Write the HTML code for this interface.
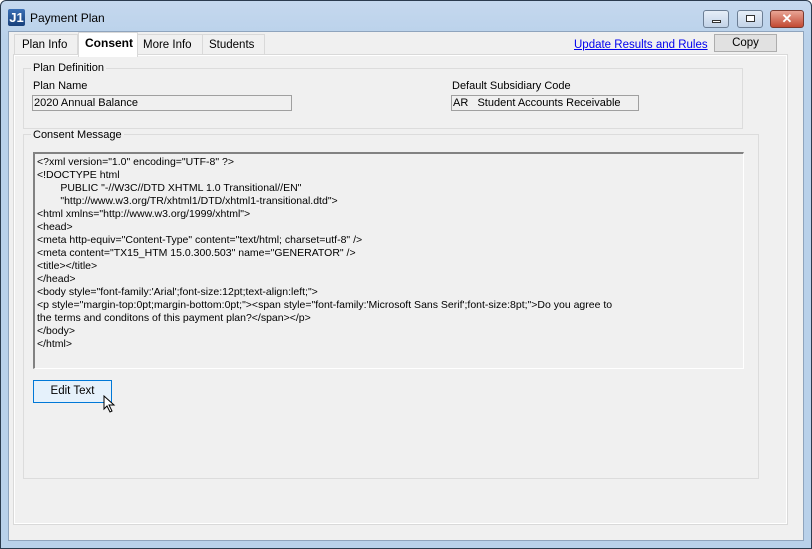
<!DOCTYPE html>
<html><head><style>
*{margin:0;padding:0;box-sizing:border-box}
body{width:812px;height:549px;overflow:hidden;background:#fff;font-family:"Liberation Sans",sans-serif;font-size:11px;color:#000;position:relative}
.a{position:absolute}
.win{left:0;top:0;width:812px;height:549px;border:1px solid #2b3b4e;border-radius:6px 6px 0 0;background:linear-gradient(#c5d8ee,#b9d1ea 40px);}
.client{left:8px;top:31px;width:796px;height:510px;background:#f0f0f0;border:1px solid #8fa4bd}
.t{white-space:pre;line-height:13px}
.grp{border:1px solid #dcdcdc}
.leg{background:#f0f0f0;padding:0 2px}
.tb{background:#f0f0f0;border:1px solid #a0a0a0}
.cap{width:26px;height:18px;border:1px solid #6c7e94;border-radius:3px;background:linear-gradient(#e6eef8,#c2d3e8)}
</style></head><body>
<div class="a win"></div>
<div class="a" style="left:8px;top:9px;width:17px;height:17px;background:linear-gradient(#3a6fb5,#173f7a);border-radius:2px;color:#fff;font-weight:bold;font-size:13px;line-height:17px;text-align:center">J1</div>
<div class="a t" style="left:30px;top:12px;font-size:12px">Payment Plan</div>
<div class="a cap" style="left:703px;top:10px"><div class="a" style="left:8px;top:9px;width:9px;height:3px;border:1px solid #333;background:#fff"></div></div>
<div class="a cap" style="left:737px;top:10px"><div class="a" style="left:8px;top:4px;width:9px;height:7px;border:1px solid #333;background:#fff"></div></div>
<div class="a" style="left:770px;top:10px;width:34px;height:18px;border:1px solid #7b3a30;border-radius:3px;background:linear-gradient(#e9a596,#c24a33);color:#fff;font-weight:bold;font-size:13px;text-align:center;line-height:16px">✕</div>
<div class="a client"></div>
<!-- tabs -->
<div class="a" style="left:14px;top:34px;width:64px;height:21px;border:1px solid #d9d9d9;border-bottom:none;background:#f0f0f0"></div>
<div class="a t" style="left:22px;top:39px;font-size:11.5px">Plan Info</div>
<div class="a" style="left:137px;top:34px;width:66px;height:21px;border:1px solid #d9d9d9;border-bottom:none"></div>
<div class="a t" style="left:143px;top:39px;font-size:11.5px">More Info</div>
<div class="a" style="left:202px;top:34px;width:63px;height:21px;border:1px solid #d9d9d9;border-bottom:none"></div>
<div class="a t" style="left:209px;top:39px;font-size:11.5px">Students</div>
<div class="a" style="left:14px;top:55px;width:773px;height:469px;border:1px solid #fff;outline:1px solid #d9d9d9"></div>
<div class="a" style="left:78px;top:32px;width:60px;height:25px;background:#fff;border:1px solid #d9d9d9;border-bottom:none"></div>
<div class="a t" style="left:85px;top:37px;font-size:12px;font-weight:bold">Consent</div>
<div class="a t" style="left:574px;top:39px;color:#0000ee;text-decoration:underline;font-size:11.5px">Update Results and Rules</div>
<div class="a" style="left:714px;top:34px;width:63px;height:18px;background:#e1e1e1;border:1px solid #adadad;text-align:center;line-height:16px;font-size:11.5px">Copy</div>
<!-- plan def -->
<div class="a grp" style="left:23px;top:68px;width:720px;height:61px"></div>
<div class="a t leg" style="left:31px;top:62px">Plan Definition</div>
<div class="a t" style="left:33px;top:80px">Plan Name</div>
<div class="a tb t" style="left:32px;top:95px;width:260px;height:16px;padding-left:1px;line-height:14px">2020 Annual Balance</div>
<div class="a t" style="left:452px;top:80px">Default Subsidiary Code</div>
<div class="a tb t" style="left:451px;top:95px;width:188px;height:16px;padding-left:1px;line-height:14px">AR   Student Accounts Receivable</div>
<!-- consent -->
<div class="a grp" style="left:23px;top:134px;width:736px;height:345px"></div>
<div class="a t leg" style="left:31px;top:129px">Consent Message</div>
<div class="a" style="left:33px;top:152px;width:711px;height:217px;background:#f0f0f0;border-top:2px solid #828282;border-left:2px solid #828282;border-right:1px solid #fff;border-bottom:1px solid #fff"></div>
<div class="a t" style="left:37px;top:156px;font-size:10.5px">&lt;?xml version="1.0" encoding="UTF-8" ?&gt;
&lt;!DOCTYPE html
        PUBLIC "-//W3C//DTD XHTML 1.0 Transitional//EN"
        "http://www.w3.org/TR/xhtml1/DTD/xhtml1-transitional.dtd"&gt;
&lt;html xmlns="http://www.w3.org/1999/xhtml"&gt;
&lt;head&gt;
&lt;meta http-equiv="Content-Type" content="text/html; charset=utf-8" /&gt;
&lt;meta content="TX15_HTM 15.0.300.503" name="GENERATOR" /&gt;
&lt;title&gt;&lt;/title&gt;
&lt;/head&gt;
&lt;body style="font-family:'Arial';font-size:12pt;text-align:left;"&gt;
&lt;p style="margin-top:0pt;margin-bottom:0pt;"&gt;&lt;span style="font-family:'Microsoft Sans Serif';font-size:8pt;"&gt;Do you agree to
the terms and conditons of this payment plan?&lt;/span&gt;&lt;/p&gt;
&lt;/body&gt;
&lt;/html&gt;</div>
<div class="a" style="left:33px;top:380px;width:79px;height:23px;background:#e5f1fb;border:1px solid #0078d7;text-align:center;line-height:21px;font-size:11.5px">Edit Text</div>
<svg class="a" style="left:103px;top:395px" width="14" height="20" viewBox="0 0 14 20"><path d="M1 1 L1 14 L4 11 L7 17 L9 16 L6 10 L11 10 Z" fill="#fff" stroke="#000" stroke-width="1"/></svg>
</body></html>
